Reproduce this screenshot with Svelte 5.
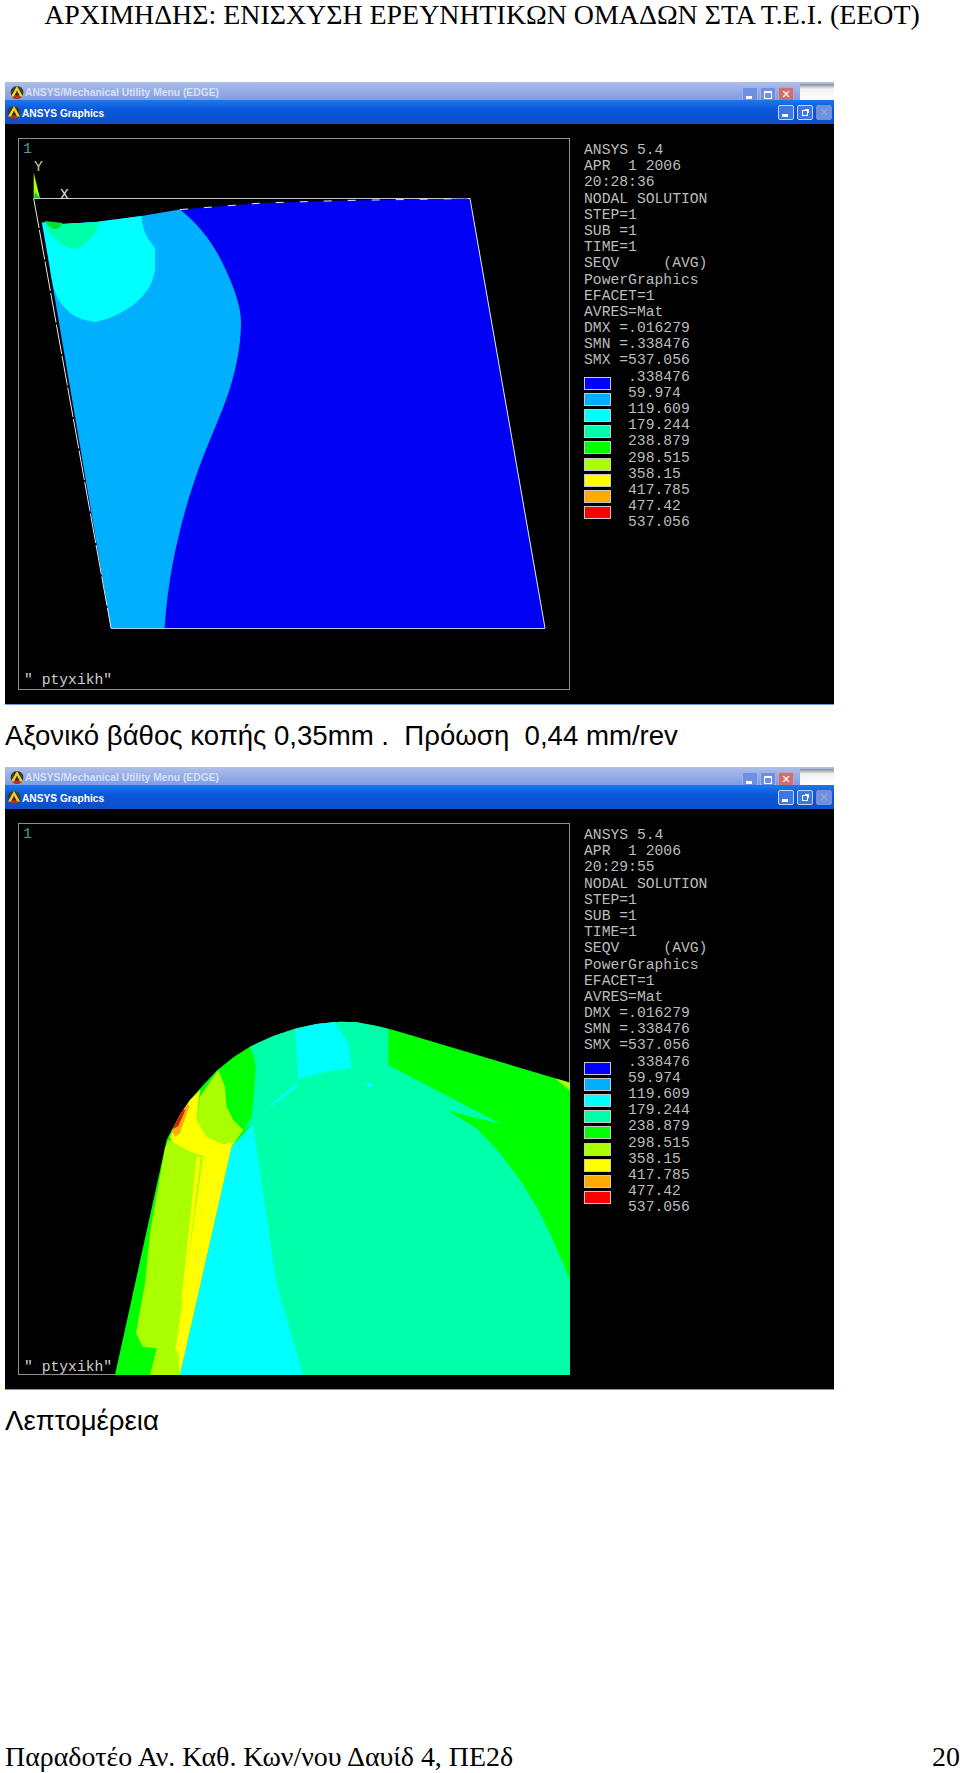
<script>
  // Readouts for the two ANSYS captures
  const legend = [
    { color: "#0000ff", label: ".338476" },
    { color: "#00b0ff", label: "59.974" },
    { color: "#00ffff", label: "119.609" },
    { color: "#00ffaa", label: "179.244" },
    { color: "#00ff00", label: "238.879" },
    { color: "#aaff00", label: "298.515" },
    { color: "#ffff00", label: "358.15" },
    { color: "#ffaa00", label: "417.785" },
    { color: "#ff0000", label: "477.42" },
  ];
  const lastLabel = "537.056";

  const info = (time) => [
    "ANSYS 5.4",
    "APR  1 2006",
    time,
    "NODAL SOLUTION",
    "STEP=1",
    "SUB =1",
    "TIME=1",
    "SEQV     (AVG)",
    "PowerGraphics",
    "EFACET=1",
    "AVRES=Mat",
    "DMX =.016279",
    "SMN =.338476",
    "SMX =537.056",
  ];

  const zx = (x) => 100 + x / 3;
  const zy = (y) => 1000 + y / 3;
  // Second plot was traced from a 3x crop, so points are scaled back here
  const pts = (list) => list.map(([x, y]) => `${zx(x)},${zy(y)}`).join(" ");

  const detail = {
    base: pts([[45,1125],[200,420],[215,390],[240,345],[270,300],[310,255],[350,212],[400,172],[450,140],[520,108],[590,85],[650,72],[720,65],[770,67],[830,78],[880,90],[1410,248],[1410,1125]]),
    corner: pts([[1365,235],[1410,248],[1410,272]]),
    teal: pts([[450,140],[520,108],[590,85],[650,72],[720,65],[770,67],[830,78],[865,86],[865,195],[1205,373],[1045,333],[1130,385],[1200,460],[1260,540],[1310,620],[1350,700],[1385,780],[1410,840],[1410,1125],[610,1125],[530,850],[460,370],[430,390],[455,350],[462,280],[467,200],[460,165]]),
    lime: pts([[195,445],[205,420],[270,455],[310,470],[395,440],[240,1125],[150,1125],[170,1045],[128,1040],[108,1000],[135,850],[150,700]]),
    lime2: pts([[300,290],[355,210],[375,260],[380,320],[400,360],[430,390],[405,425],[370,432],[320,410],[290,360]]),
    yellow: pts([[210,410],[240,345],[270,300],[300,270],[290,360],[320,410],[370,432],[405,425],[395,440],[240,1125],[235,1060],[226,1050],[310,470],[270,455],[215,425]]),
    streak: pts([[290,470],[302,470],[250,900],[244,900]]),
    orange: pts([[215,395],[240,345],[262,312],[268,318],[240,400],[225,410]]),
    red: pts([[217,388],[240,345],[252,326],[255,332],[235,378]]),
    cyan: pts([[460,370],[530,850],[610,1125],[240,1125],[395,440]]),
    cyanTop: pts([[585,88],[650,72],[705,66],[745,130],[755,205],[690,212],[620,230],[595,240]]),
    sliver: pts([[505,320],[590,250],[595,258],[520,315]]),
    dot: pts([[798,252],[810,248],[822,258],[808,262]]),
  };
</script>

{#snippet logo()}
  <svg class="logo" viewBox="0 0 14 14" aria-hidden="true">
    <circle cx="7" cy="7.4" r="6.4" fill="#3c3a2c" />
    <path d="M1.4 10.4 A6.4 6.4 0 0 0 12.6 10.4 Z" fill="#b8321c" />
    <path d="M7 1 L13 11.4 H10 L7 5.6 L4 11.4 H1 Z" fill="#f2d030" />
    <path d="M5.6 9.2 H8.4" stroke="#2a2a10" stroke-width="1.4" />
  </svg>
{/snippet}

{#snippet capture(time, plot)}
  <div class="shot">
    <div class="menubar">
      <div class="menubar-title">
        {@render logo()}
        <span class="menubar-text">ANSYS/Mechanical Utility Menu (EDGE)</span>
      </div>
      <div class="btns">
        <span class="btn"><i class="min"></i></span>
        <span class="btn"><i class="max"></i></span>
        <span class="btn close"><b>✕</b></span>
      </div>
      <div class="patch"></div>
    </div>
    <div class="gfxbar">
      {@render logo()}
      <span class="gfxbar-text">ANSYS Graphics</span>
      <div class="btns right">
        <span class="btn"><i class="min"></i></span>
        <span class="btn"><i class="restore"></i></span>
        <span class="btn faded"><b>✕</b></span>
      </div>
    </div>
    <div class="gfx">
      {@render plot()}
      <div class="readout">
        {#each info(time) as line}
          <div class="line">{line}</div>
        {/each}
        <div class="legend">
          <div class="swatches">
            {#each legend as row}
              <span class="swatch" style="background:{row.color}"></span>
            {/each}
          </div>
          <div class="labels">
            {#each legend as row}
              <div class="line">{row.label}</div>
            {/each}
            <div class="line">{lastLabel}</div>
          </div>
        </div>
      </div>
    </div>
  </div>
{/snippet}

{#snippet plotOverview()}
  <svg class="plot" viewBox="18 138 552 552" aria-hidden="true">
    <rect x="18.5" y="138.5" width="551" height="551" fill="#000" stroke="#8f8f8f" />
    <polygon points="33.7,172.6 40,198.5 33.7,198.5" fill="#aaff00" />
    <polygon points="35,192 40,198.5 34,198.5" fill="#00d040" />
    <line x1="33.7" y1="198.5" x2="470" y2="198.5" stroke="#c8c8c8" />
    <path d="M42 222.6 L63 224 L96 222 L141.6 216 L180 209.6 L262 203 L344 200.5 L470 198.5 L545 628 L111 628 Z" fill="#0000f4" />
    <path d="M42 222.6 L63 224 L96 222 L141.6 216 L180 209.6 C200 226 212 242 222 262 C235 288 241 308 241 322 C241 350 234 378 226 400 C214 432 204 452 194 482 C180 524 168 574 164.6 628 L111 628 Z" fill="#00b0ff" />
    <path d="M42 222.6 L63 224 L96 222 L141.6 216 C142 226 145 234 149 240 L155 248 L155 271 C152 282 150 288 145 293 C138 302 130 308 122 312 C112 318 104 320 94 322 C84 320 78 318 73 315 C64 308 60 302 57 297 C52 284 51 275 50 267 Z" fill="#00ffff" />
    <path d="M44 222 L63 224 L99.5 222 C97 230 95 233 92 237 C86 244 82 247 75 249 C68 248 62 245 57 241 C52 236 49 233 47 229 Z" fill="#00ffaa" />
    <path d="M45 221 L63 223 C60 227 58 229 55 229 C50 228 47 225 45 221 Z" fill="#00e030" />
    <line x1="33.7" y1="198.5" x2="111" y2="628" stroke="#e8e8e8" stroke-dasharray="30 2" />
    <line x1="470" y1="198.5" x2="545" y2="628" stroke="#e8e8e8" />
    <line x1="111" y1="628.5" x2="545" y2="628.5" stroke="#b0d0f0" />
    <path d="M180 209.6 L262 203 L344 200.5 L470 198.5" fill="none" stroke="#e8e8e8" stroke-dasharray="8 16" />
    <text class="tri" x="23" y="153" fill="#4f9a9a">1</text>
    <text class="tri" x="34" y="171" fill="#c8c8a8">Y</text>
    <text class="tri" x="60" y="199" fill="#e0e0e0">X</text>
    <text class="tri" x="24" y="684" fill="#d0d0d0">" ptyxikh"</text>
  </svg>
{/snippet}

{#snippet plotDetail()}
  <svg class="plot" viewBox="18 823 552 552" aria-hidden="true">
    <rect x="18.5" y="823.5" width="551" height="551" fill="#000" stroke="#8f8f8f" />
    <polygon points={detail.base} fill="#00ff00" />
    <polygon points={detail.corner} fill="#aaff00" />
    <polygon points={detail.teal} fill="#00ffaa" />
    <polygon points={detail.lime} fill="#aaff00" />
    <polygon points={detail.lime2} fill="#aaff00" />
    <polygon points={detail.yellow} fill="#ffff00" />
    <polygon points={detail.streak} fill="#ffff00" />
    <polygon points={detail.orange} fill="#ffaa00" />
    <polygon points={detail.red} fill="#d02000" />
    <polygon points={detail.cyan} fill="#00ffff" />
    <polygon points={detail.cyanTop} fill="#00ffff" />
    <polygon points={detail.sliver} fill="#00ffff" />
    <polygon points={detail.dot} fill="#00ffff" />
    <line x1="18" y1="1374.5" x2="115" y2="1374.5" stroke="#8f8f8f" />
    <text class="tri" x="23" y="838" fill="#4f9a9a">1</text>
    <text class="tri" x="24" y="1371" fill="#d0d0d0">" ptyxikh"</text>
  </svg>
{/snippet}

<div class="page">
  <h1>ΑΡΧΙΜΗΔΗΣ: ΕΝΙΣΧΥΣΗ ΕΡΕΥΝΗΤΙΚΩΝ ΟΜΑΔΩΝ ΣΤΑ Τ.Ε.Ι. (ΕΕΟΤ)</h1>

  {@render capture("20:28:36", plotOverview)}
  <p class="caption first">Αξονικό βάθος κοπής 0,35mm .&nbsp; Πρόωση&nbsp; 0,44 mm/rev</p>

  {@render capture("20:29:55", plotDetail)}
  <p class="caption">Λεπτομέρεια</p>

  <footer>
    <span>Παραδοτέο Αν. Καθ. Κων/νου Δαυίδ 4, ΠΕ2δ</span>
    <span>20</span>
  </footer>
</div>

<style>
  :global(body) {
    background: #fff;
  }

  .page {
    width: 960px;
    height: 1773px;
    display: flex;
    flex-direction: column;
    color: #000;
    font-family: "Liberation Sans", sans-serif;
    overflow: hidden;
  }

  h1 {
    margin: 0 0 52px;
    height: 30px;
    text-align: center;
    padding-left: 4px;
    font: 400 27.9px/30px "Liberation Serif", serif;
    white-space: nowrap;
  }

  .shot {
    width: 829px;
    height: 622px;
    margin-left: 5px;
    flex: none;
    display: flex;
    flex-direction: column;
    background: #000;
    border-bottom: 1px solid #6f9ad8;
  }

  .menubar {
    height: 18px;
    flex: none;
    display: flex;
    align-items: flex-start;
    background: linear-gradient(#aebfe8, #7d9ce6);
    overflow: hidden;
  }

  .menubar-title {
    flex: 1;
    display: flex;
    align-items: flex-start;
    gap: 1px;
    padding: 3px 0 0 5px;
    overflow: hidden;
  }

  .menubar-text {
    font: 700 10.3px/14px "Liberation Sans", sans-serif;
    color: #d6e0f6;
    margin-top: 1px;
    white-space: nowrap;
  }

  .patch {
    width: 34px;
    height: 16px;
    margin-top: 2px;
    background: linear-gradient(#8a8a8a, #f2f2f2 30%, #fff);
    flex: none;
  }

  .gfxbar {
    height: 24px;
    flex: none;
    display: flex;
    align-items: center;
    gap: 1px;
    padding-left: 2px;
    background: linear-gradient(#1c78ec, #0a58dc 40%, #0d4ec4);
  }

  .gfxbar-text {
    font: 700 10.2px/14px "Liberation Sans", sans-serif;
    color: #fff;
    white-space: nowrap;
    padding-top: 3px;
  }

  .logo {
    width: 14px;
    height: 14px;
    flex: none;
  }

  .btns {
    display: flex;
    gap: 2px;
    margin-right: 6px;
    padding-top: 5px;
  }

  .btns.right {
    margin-left: auto;
    margin-right: 2px;
    padding-top: 0;
    gap: 3px;
  }

  .btn {
    width: 16px;
    height: 15px;
    box-sizing: border-box;
    border: 1px solid #c4d4f4;
    border-radius: 2px;
    background: #3a78e4;
    display: flex;
    position: relative;
    align-items: center;
    justify-content: center;
  }

  .menubar .btn {
    background: #6f8fe0;
    border-color: #9cb2ec;
  }

  .menubar .btn.close {
    background: #cc7074;
    border-color: #c8a0a8;
  }

  .btn.faded {
    background: #6f90dc;
    border-color: #6f90dc;
  }

  .btn b {
    font: 700 11px/1 "DejaVu Sans", sans-serif;
    color: #fff;
  }

  .btn.faded b {
    color: #96a8d8;
  }

  .min {
    width: 6px;
    height: 3px;
    background: #fff;
    position: absolute;
    left: 3px;
    bottom: 2px;
  }

  .max {
    width: 8px;
    height: 8px;
    box-sizing: border-box;
    border: 1px solid #fff;
    border-top-width: 2px;
  }

  .restore {
    width: 6px;
    height: 6px;
    box-sizing: border-box;
    border: 1px solid #fff;
    box-shadow: 2px -2px 0 -1px #fff;
    margin: 1px 1px 0 0;
  }

  .gfx {
    flex: 1;
    display: flex;
    padding: 14px 0 0 13px;
    gap: 14px;
    min-height: 0;
  }

  .plot {
    width: 552px;
    height: 552px;
    flex: none;
    display: block;
  }

  .tri {
    font: 400 14.7px "Liberation Mono", monospace;
  }

  .readout {
    font: 400 14.7px/16.2px "Liberation Mono", monospace;
    color: #bcbcbc;
    padding-top: 4px;
  }

  .line {
    height: 16.2px;
    white-space: pre;
  }

  .legend {
    display: flex;
    gap: 17px;
  }

  .swatches {
    display: flex;
    flex-direction: column;
    gap: 3.2px;
    padding-top: 8px;
  }

  .swatch {
    display: block;
    width: 27px;
    height: 13px;
    box-sizing: border-box;
    border: 1px solid #c8c8c8;
  }

  .caption {
    margin: 0;
    font-size: 27.6px;
    line-height: 28px;
    height: 28px;
    padding: 17px 0 19px 5px;
    flex: none;
    white-space: pre;
  }

  .caption.first {
    padding-bottom: 17px;
  }

  footer {
    margin-top: auto;
    display: flex;
    justify-content: space-between;
    padding: 0 0 0 5px;
    font: 400 27.9px/32px "Liberation Serif", serif;
  }
</style>
